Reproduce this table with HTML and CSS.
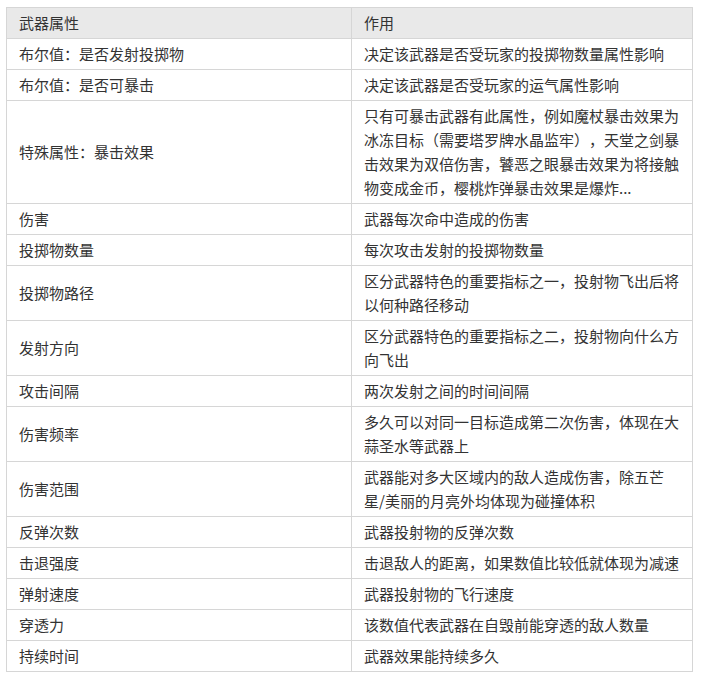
FILE: index.html
```html
<!DOCTYPE html>
<html lang="zh-CN">
<head>
<meta charset="utf-8">
<title>武器属性</title>
<link rel="stylesheet" href="styles.css">
</head>
<body>
<table class="attr-table">
  <thead>
    <tr><th>武器属性</th><th>作用</th></tr>
  </thead>
  <tbody>
    <tr><td>布尔值：是否发射投掷物</td><td>决定该武器是否受玩家的投掷物数量属性影响</td></tr>
    <tr><td>布尔值：是否可暴击</td><td>决定该武器是否受玩家的运气属性影响</td></tr>
    <tr><td>特殊属性：暴击效果</td><td>只有可暴击武器有此属性，例如魔杖暴击效果为冰冻目标（需要塔罗牌水晶监牢），天堂之剑暴击效果为双倍伤害，饕恶之眼暴击效果为将接触物变成金币，樱桃炸弹暴击效果是爆炸...</td></tr>
    <tr><td>伤害</td><td>武器每次命中造成的伤害</td></tr>
    <tr><td>投掷物数量</td><td>每次攻击发射的投掷物数量</td></tr>
    <tr><td>投掷物路径</td><td>区分武器特色的重要指标之一，投射物飞出后将以何种路径移动</td></tr>
    <tr><td>发射方向</td><td>区分武器特色的重要指标之二，投射物向什么方向飞出</td></tr>
    <tr><td>攻击间隔</td><td>两次发射之间的时间间隔</td></tr>
    <tr><td>伤害频率</td><td>多久可以对同一目标造成第二次伤害，体现在大蒜圣水等武器上</td></tr>
    <tr><td>伤害范围</td><td>武器能对多大区域内的敌人造成伤害，除五芒星/美丽的月亮外均体现为碰撞体积</td></tr>
    <tr><td>反弹次数</td><td>武器投射物的反弹次数</td></tr>
    <tr><td>击退强度</td><td>击退敌人的距离，如果数值比较低就体现为减速</td></tr>
    <tr><td>弹射速度</td><td>武器投射物的飞行速度</td></tr>
    <tr><td>穿透力</td><td>该数值代表武器在自毁前能穿透的敌人数量</td></tr>
    <tr><td>持续时间</td><td>武器效果能持续多久</td></tr>
  </tbody>
</table>
</body>
</html>
```
FILE: styles.css
```css
html, body {
  margin: 0;
  padding: 0;
  background: #fff;
}
body {
  padding: 7px 6px;
  font-family: "Noto Sans CJK SC", "Noto Sans", sans-serif;
  font-size: 15px;
  color: #333;
  text-spacing-trim: space-all;
}
.attr-table {
  border-collapse: collapse;
  width: 687px;
  table-layout: fixed;
}
.attr-table th,
.attr-table td {
  border: 1px solid #d6d6d6;
  padding: 3px 12px;
  line-height: 24px;
  text-align: left;
  vertical-align: middle;
  font-weight: normal;
}
.attr-table th:first-child,
.attr-table td:first-child {
  width: 320px;
}
.attr-table thead th {
  background: #e9e9e9;
}
```
